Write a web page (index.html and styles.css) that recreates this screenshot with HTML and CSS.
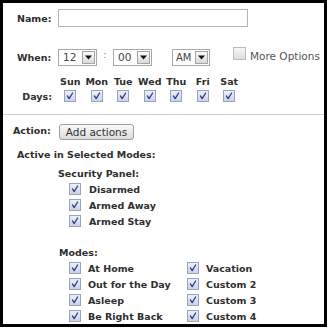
FILE: index.html
```html
<!DOCTYPE html>
<html>
<head>
<meta charset="utf-8">
<link rel="stylesheet" href="styles.css">
</head>
<body>
<div class="frame">
  <div class="row row-name">
    <span class="lbl lbl-w">Name:</span>
    <span class="text-input"></span>
  </div>

  <div class="row row-when">
    <span class="lbl lbl-w">When:</span>
    <span class="select s-num"><span class="sv">12</span><span class="sbtn"><svg width="7" height="5" viewBox="0 0 7 5"><path d="M0 0.5H7L3.5 4.5Z" fill="#111"/></svg></span></span>
    <span class="colon">:</span>
    <span class="select s-num"><span class="sv">00</span><span class="sbtn"><svg width="7" height="5" viewBox="0 0 7 5"><path d="M0 0.5H7L3.5 4.5Z" fill="#111"/></svg></span></span>
    <span class="select s-ampm"><span class="sv">AM</span><span class="sbtn"><svg width="7" height="5" viewBox="0 0 7 5"><path d="M0 0.5H7L3.5 4.5Z" fill="#111"/></svg></span></span>
    <span class="cb cb-off cb-more"></span>
    <span class="reg more">More Options</span>
  </div>

  <div class="days-grid days-head">
    <span></span>
    <span>Sun</span><span>Mon</span><span>Tue</span><span>Wed</span><span>Thu</span><span>Fri</span><span>Sat</span>
  </div>
  <div class="days-grid days-row">
    <span class="days-lbl">Days:</span>
    <span><i class="cb"><svg viewBox="0 0 11 11"><path d="M2.6 5.4L4.6 8.4L8.4 2.2"/></svg></i></span>
    <span><i class="cb"><svg viewBox="0 0 11 11"><path d="M2.6 5.4L4.6 8.4L8.4 2.2"/></svg></i></span>
    <span><i class="cb"><svg viewBox="0 0 11 11"><path d="M2.6 5.4L4.6 8.4L8.4 2.2"/></svg></i></span>
    <span><i class="cb"><svg viewBox="0 0 11 11"><path d="M2.6 5.4L4.6 8.4L8.4 2.2"/></svg></i></span>
    <span><i class="cb"><svg viewBox="0 0 11 11"><path d="M2.6 5.4L4.6 8.4L8.4 2.2"/></svg></i></span>
    <span><i class="cb"><svg viewBox="0 0 11 11"><path d="M2.6 5.4L4.6 8.4L8.4 2.2"/></svg></i></span>
    <span><i class="cb"><svg viewBox="0 0 11 11"><path d="M2.6 5.4L4.6 8.4L8.4 2.2"/></svg></i></span>
  </div>

  <div class="divider"></div>

  <div class="row row-action">
    <span class="lbl lbl-a">Action:</span>
    <span class="button">Add actions</span>
  </div>

  <div class="heading h-active">Active in Selected Modes:</div>
  <div class="heading h-sub h-sec">Security Panel:</div>
  <div class="list">
    <div class="item"><i class="cb"><svg viewBox="0 0 11 11"><path d="M2.6 5.4L4.6 8.4L8.4 2.2"/></svg></i><span>Disarmed</span></div>
    <div class="item"><i class="cb"><svg viewBox="0 0 11 11"><path d="M2.6 5.4L4.6 8.4L8.4 2.2"/></svg></i><span>Armed Away</span></div>
    <div class="item"><i class="cb"><svg viewBox="0 0 11 11"><path d="M2.6 5.4L4.6 8.4L8.4 2.2"/></svg></i><span>Armed Stay</span></div>
  </div>

  <div class="heading h-sub h-modes">Modes:</div>
  <div class="modes">
    <div class="item"><i class="cb"><svg viewBox="0 0 11 11"><path d="M2.6 5.4L4.6 8.4L8.4 2.2"/></svg></i><span>At Home</span></div>
    <div class="item"><i class="cb"><svg viewBox="0 0 11 11"><path d="M2.6 5.4L4.6 8.4L8.4 2.2"/></svg></i><span>Vacation</span></div>
    <div class="item"><i class="cb"><svg viewBox="0 0 11 11"><path d="M2.6 5.4L4.6 8.4L8.4 2.2"/></svg></i><span>Out for the Day</span></div>
    <div class="item"><i class="cb"><svg viewBox="0 0 11 11"><path d="M2.6 5.4L4.6 8.4L8.4 2.2"/></svg></i><span>Custom 2</span></div>
    <div class="item"><i class="cb"><svg viewBox="0 0 11 11"><path d="M2.6 5.4L4.6 8.4L8.4 2.2"/></svg></i><span>Asleep</span></div>
    <div class="item"><i class="cb"><svg viewBox="0 0 11 11"><path d="M2.6 5.4L4.6 8.4L8.4 2.2"/></svg></i><span>Custom 3</span></div>
    <div class="item"><i class="cb"><svg viewBox="0 0 11 11"><path d="M2.6 5.4L4.6 8.4L8.4 2.2"/></svg></i><span>Be Right Back</span></div>
    <div class="item"><i class="cb"><svg viewBox="0 0 11 11"><path d="M2.6 5.4L4.6 8.4L8.4 2.2"/></svg></i><span>Custom 4</span></div>
  </div>
</div>
</body>
</html>
```

FILE: styles.css
```css
html, body {
  margin: 0;
  padding: 0;
  background: #fff;
}
body {
  font-family: "DejaVu Sans", Verdana, sans-serif;
  font-size: 9.5px;
  font-weight: bold;
  color: #2e2e2e;
}
.frame {
  box-sizing: border-box;
  width: 327px;
  height: 327px;
  border: 3px solid #000;
  background: #fff;
  display: flex;
  flex-direction: column;
  overflow: hidden;
}
.row {
  display: flex;
  align-items: center;
}
.row-name {
  height: 18px;
  margin-top: 6px;
  padding-left: 14px;
}
.lbl-w {
  width: 41px;
}
.text-input {
  box-sizing: border-box;
  width: 190px;
  height: 18px;
  border: 1px solid #b4b4b4;
  background: #fff;
}
.row-when {
  height: 18px;
  margin-top: 21px;
  padding-left: 14px;
}
.select {
  box-sizing: border-box;
  height: 17px;
  border: 1px solid #a9a9a9;
  background: #fff;
  display: flex;
  align-items: center;
  justify-content: space-between;
}
.s-num { width: 39px; }
.s-ampm { width: 38px; margin-left: 20px; }
.sv {
  font-weight: normal;
  font-size: 10.5px;
  color: #444;
  padding-left: 4px;
}
.s-ampm .sv {
  padding-left: 3px;
  font-size: 10px;
}
.sbtn {
  box-sizing: border-box;
  width: 13px;
  height: 13px;
  margin-right: 1px;
  border: 1px solid #a4a4a4;
  background: linear-gradient(#fbfbfb, #d9d9d9);
  display: flex;
  align-items: center;
  justify-content: center;
}
.sbtn svg { display: block; }
.colon {
  width: 16px;
  text-align: center;
  font-weight: normal;
  color: #777;
  font-size: 9px;
  margin-top: -5px;
}
.cb {
  box-sizing: border-box;
  display: inline-block;
  width: 12px;
  height: 12px;
  border: 1px solid #9aa5bd;
  background: linear-gradient(#eef0f6, #ccd3e2);
  flex: none;
}
.cb svg {
  display: block;
  width: 10px;
  height: 10px;
}
.cb svg path {
  fill: none;
  stroke: #2a3c98;
  stroke-width: 1.4;
  stroke-linecap: round;
  stroke-linejoin: round;
}
.cb-off {
  border-color: #bcbcbc;
  background: linear-gradient(#f6f6f6, #dedede);
}
.cb-more {
  width: 13px;
  height: 13px;
  margin-left: 23px;
  margin-top: -7px;
}
.reg {
  font-weight: normal;
  font-size: 10.5px;
  color: #555;
}
.more {
  margin-left: 4px;
  margin-top: -3px;
}
.days-grid {
  display: grid;
  grid-template-columns: 54px repeat(7, 26.5px);
  align-items: center;
}
.days-grid > span {
  text-align: center;
}
.days-head {
  height: 12px;
  margin-top: 9px;
}
.days-row {
  height: 14px;
  margin-top: 2px;
}
.days-row > span {
  display: flex;
  justify-content: center;
}
.days-row > .days-lbl {
  display: block;
  text-align: right;
  padding-right: 5px;
}
.divider {
  height: 1px;
  background: #cfcfcf;
  margin-top: 11px;
}
.row-action {
  height: 16px;
  margin-top: 9px;
  padding-left: 10px;
}
.lbl-a {
  width: 46px;
  margin-top: -4px;
}
.button {
  box-sizing: border-box;
  width: 75px;
  height: 16px;
  border: 1px solid #9f9f9f;
  border-radius: 3px;
  background: linear-gradient(#fafafa, #dcdcdc);
  font-weight: normal;
  font-size: 10.5px;
  color: #333;
  display: flex;
  align-items: center;
  justify-content: center;
}
.heading {
  height: 12px;
  line-height: 12px;
}
.h-active {
  margin-top: 9px;
  padding-left: 14px;
}
.h-sec {
  margin-top: 7px;
  padding-left: 55px;
}
.h-modes {
  margin-top: 18px;
  padding-left: 56px;
}
.list {
  margin-top: 1px;
  padding-left: 66px;
  display: flex;
  flex-direction: column;
}
.item {
  height: 16px;
  display: flex;
  align-items: center;
}
.item > span {
  margin-left: 8px;
}
.modes {
  margin-top: 1px;
  padding-left: 66px;
  display: grid;
  grid-template-columns: 118px auto;
}
.modes .item > span {
  margin-left: 7px;
}
```
